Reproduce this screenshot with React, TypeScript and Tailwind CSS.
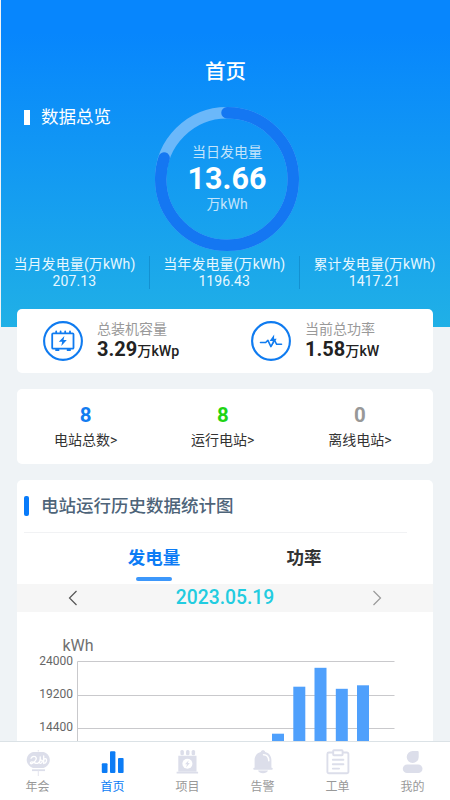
import React from 'react';

const stats = [
  { label: '当月发电量(万kWh)', value: '207.13' },
  { label: '当年发电量(万kWh)', value: '1196.43' },
  { label: '累计发电量(万kWh)', value: '1417.21' },
];

const stations = [
  { label: '电站总数>', value: '8', color: 'text-[#127cf0]' },
  { label: '运行电站>', value: '8', color: 'text-[#1fd414]' },
  { label: '离线电站>', value: '0', color: 'text-[#989898]' },
];

const bars = [
  { x: 272, y: 733.7 },
  { x: 293.3, y: 686.7 },
  { x: 314.5, y: 667.8 },
  { x: 335.8, y: 688.8 },
  { x: 357, y: 685.3 },
];

function Ring() {
  const r = 66.3;
  const c = 2 * Math.PI * r;
  return (
    <svg className="col-start-1 row-start-1" width="146" height="146" viewBox="0 0 146 146" fill="none">
      <circle cx="73" cy="73" r={r} stroke="#6bb8fa" strokeWidth="11.5" />
      <circle
        cx="73"
        cy="73"
        r={r}
        stroke="#1477f2"
        strokeWidth="11.5"
        strokeLinecap="round"
        strokeDasharray={`${c * 0.8} ${c}`}
        transform="rotate(-90 73 73)"
      />
    </svg>
  );
}

function CapacityIcon() {
  return (
    <svg width="40" height="40" viewBox="0 0 40 40" fill="none" stroke="#0f7bf0">
      <circle cx="20" cy="20" r="18.9" strokeWidth="2.1" />
      <rect x="9.2" y="12.3" width="21.3" height="15.4" rx="1" strokeWidth="1.8" />
      <path d="M13.2 12v-1.6M17.6 12v-1.6M22.2 12v-1.6M27 12v-1.6" strokeWidth="1.8" strokeLinecap="round" />
      <path d="M12.3 29h4M23.8 29h4" strokeWidth="2.2" />
      <path d="M21.4 15l-5.6 5.800h3.400l-.9 4.200 5.500-5.900h-3.300z" fill="#0f7bf0" stroke="none" />
    </svg>
  );
}

function PowerIcon() {
  return (
    <svg width="40" height="40" viewBox="0 0 40 40" fill="none" stroke="#0f7bf0" strokeLinejoin="round" strokeLinecap="round">
      <circle cx="20" cy="20" r="18.9" strokeWidth="2.1" />
      <path d="M9.5 21.5h5.2l2.2-2.200 3 6.300 1.900-3.400M23.500 19.300l2.200 4h4.800" strokeWidth="1.600" />
      <path d="M23.200 13.400l-4.600 6.600h3.100l-.8 4.700 4.800-6.900h-2.700z" fill="#0f7bf0" stroke="none" />
    </svg>
  );
}

function MeetingIcon() {
  return (
    <svg width="26" height="28" viewBox="0 0 26 28" fill="none">
      <path d="M8 3h10.500c4 1 6.300 4.500 6.300 8s-2.300 6.500-6.300 8H8c-4-1.500-6.300-4.500-6.300-8S4 4 8 3z" fill="#dcdeea" />
      <path d="M6 9.200c1.400-2.500 4.700-2.400 5.200-.2.5 2-1.300 3.500-3.800 5.300-1.800 1.300-2.800-.5-1.200-1.300 2.200-1 4.100 2.400 6.800 1.200 1.900-.8 2.500-3.200 2.200-6.300M15.500 11.500c1.600-.8 2.300.2 1.500 1.700-.6 1-1.500 1.300-2 1M18.700 7v7.500M19 10.300c1.600-1.300 2.800-.3 2.500 1.500-.3 1.700-1.600 2.500-2.500 2.200" stroke="white" strokeWidth="1.300" strokeLinecap="round" />
      <path d="M7 21.200h13" stroke="#dcdeea" strokeWidth="1.800" />
      <path d="M13.300 21.500V27M13.300 1v1.500" stroke="#e5e6ef" strokeWidth="1.100" />
    </svg>
  );
}

function HomeIcon() {
  return (
    <svg width="26" height="28" viewBox="0 0 26 28" fill="#0c7cf5">
      <rect x="1.800" y="14.200" width="5.700" height="9.800" rx="1" />
      <rect x="10" y="2.200" width="5.400" height="21.800" rx="1" />
      <rect x="18" y="9" width="5.600" height="15" rx="1" />
    </svg>
  );
}

function ProjectIcon() {
  return (
    <svg width="26" height="28" viewBox="0 0 26 28" fill="#dcdeea">
      <rect x="5.400" y="1" width="3.500" height="5.300" rx="1.500" />
      <rect x="11" y="1" width="3.500" height="5.300" rx="1.500" />
      <rect x="16.600" y="1" width="3.500" height="5.300" rx="1.500" />
      <path d="M3.300 6.800h18.200v15.700H3.300zM1.600 22.800h21.500v1.700H1.600z" />
      <circle cx="12.400" cy="14.800" r="5" fill="white" />
      <path d="M13.800 11.200l-3.800 4h2l-.9 3.300 3.700-4.400h-2z" />
    </svg>
  );
}

function BellIcon() {
  return (
    <svg width="26" height="28" viewBox="0 0 26 28" fill="#dcdeea">
      <path d="M13 1.300c1.100 0 2 .7 2.200 1.600 3.700.9 6.200 4 6.200 7.900v8.300H4.600v-8.300c0-3.900 2.500-7 6.200-7.900.2-.9 1.100-1.600 2.200-1.600z" />
      <rect x="3.300" y="18.800" width="19.400" height="1.900" rx=".8" />
      <path d="M8 21.500h10c-.8 1.800-2.500 2.800-5 2.800s-4.200-1-5-2.800z" />
      <path d="M13.500 5.700c3.200 0 5.200 2.200 5.300 6" stroke="white" strokeWidth="1.500" strokeLinecap="round" fill="none" />
    </svg>
  );
}

function OrderIcon() {
  return (
    <svg width="26" height="28" viewBox="0 0 26 28" fill="none" stroke="#dcdeea" strokeWidth="1.900">
      <path d="M8 3.500H3.900a1.500 1.500 0 0 0-1.500 1.500v17.800a1.500 1.500 0 0 0 1.500 1.500h18a1.500 1.500 0 0 0 1.500-1.500V5a1.500 1.500 0 0 0-1.500-1.500H18" />
      <rect x="8.200" y="1.200" width="9.400" height="5" rx=".7" />
      <path d="M7.800 10.800h10.600M7.800 15.300h10.600M7.800 19.600h6.300" strokeLinecap="round" />
    </svg>
  );
}

function ProfileIcon() {
  return (
    <svg width="26" height="28" viewBox="0 0 26 28" fill="#dcdeea">
      <path d="M12.700 2h4.700c.9 0 1.300.5 1.300 1.300v4.900A6 6 0 1 1 12.700 2z" />
      <rect x="2.800" y="15.500" width="19.700" height="8.600" rx="4.300" />
    </svg>
  );
}

const tabs = [
  { label: '年会', Icon: MeetingIcon },
  { label: '首页', Icon: HomeIcon, active: true },
  { label: '项目', Icon: ProjectIcon },
  { label: '告警', Icon: BellIcon },
  { label: '工单', Icon: OrderIcon },
  { label: '我的', Icon: ProfileIcon },
];

function Chart() {
  return (
    <svg
      className="block font-[Roboto,'Noto_Sans_CJK_SC',sans-serif]"
      width="416"
      height="129"
      viewBox="17 612 416 129"
    >
      <text x="62.500" y="650.500" fontSize="16" fill="#707070">kWh</text>
      <g stroke="#c9c9cc" strokeWidth="1">
        <path d="M77.500 661.500h317M77.500 695.500h317M77.500 728.500h317M77.500 661.500V741" />
      </g>
      <g fontSize="12" fill="#666" textAnchor="end">
        <text x="73" y="664.500">24000</text>
        <text x="73" y="697.800">19200</text>
        <text x="73" y="731.300">14400</text>
      </g>
      {bars.map((b) => (
        <rect key={b.x} x={b.x} y={b.y} width="12" height={741 - b.y} fill="#4fa0fc" />
      ))}
    </svg>
  );
}

export default function App() {
  return (
    <div className="flex h-[800px] w-[450px] flex-col overflow-hidden bg-[#eff3f6] font-[Roboto,'Noto_Sans_CJK_SC',sans-serif]">
      <main className="h-[741px] shrink-0 overflow-hidden">
        <header className="ml-px h-[327px] bg-linear-to-b/srgb from-[#0786fd] from-10% to-[#20b0e6] text-white">
          <h1 className="pt-[57px] text-center text-[20.500px] leading-[30px] font-medium">首页</h1>
          <div className="flex h-[166px] items-start">
            <div className="flex w-[153px] items-center gap-[11px] pt-[17px] pl-[23px]">
              <span className="h-[15px] w-[6px] bg-white" />
              <h2 className="text-[17.500px] leading-[26px]">数据总览</h2>
            </div>
            <div className="mt-[18.500px] grid place-items-center">
              <Ring />
              <div className="col-start-1 row-start-1 flex flex-col items-center text-[#c3e4fb]">
                <span className="text-[14px] leading-[19px]">当日发电量</span>
                <strong className="text-[30.500px] leading-[33px] font-bold text-white">13.66</strong>
                <span className="text-[14px] leading-[19px]">万kWh</span>
              </div>
            </div>
          </div>
          <div className="-ml-px flex divide-x divide-[#1391d2] pt-[3px]">
            {stats.map((s) => (
              <div key={s.label} className="flex h-[33px] w-[149.800px] flex-col items-center text-[#e6f7ff]">
                <span className="text-[14px] leading-[17px] tracking-[0.1px] whitespace-nowrap">{s.label}</span>
                <span className="text-[14px] leading-[17px] tracking-[0.1px]">{s.value}</span>
              </div>
            ))}
          </div>
        </header>

        <div className="-mt-[18px] flex flex-col gap-[16px] px-[17px]">
          <section className="flex h-[64px] rounded-[5px] bg-white">
            <div className="flex w-[207px] items-center gap-[14px] pl-[26px]">
              <CapacityIcon />
              <div>
                <p className="text-[14px] leading-[18px] text-[#999]">总装机容量</p>
                <p className="text-[20px] leading-[22px] font-bold text-[#222]">
                  3.29<span className="text-[14.200px] font-medium">万kWp</span>
                </p>
              </div>
            </div>
            <div className="flex items-center gap-[14px] pl-[27px]">
              <PowerIcon />
              <div>
                <p className="text-[14px] leading-[18px] text-[#999]">当前总功率</p>
                <p className="text-[20px] leading-[22px] font-bold text-[#222]">
                  1.58<span className="text-[14.200px] font-medium">万kW</span>
                </p>
              </div>
            </div>
          </section>

          <section className="flex h-[75px] rounded-[5px] bg-white">
            {stations.map((s) => (
              <div key={s.label} className="flex w-[137.200px] flex-col items-center pt-[14px]">
                <span className={`text-[20.500px] leading-[24px] font-bold ${s.color}`}>{s.value}</span>
                <span className="mt-[3px] text-[14px] leading-[20px] text-[#333]">{s.label}</span>
              </div>
            ))}
          </section>

          <section className="h-[280px] rounded-[5px] bg-white">
            <div className="mx-[7px] flex h-[53px] w-[383px] items-center gap-[12px] border-b border-[#f1f2f4]">
              <span className="h-[20px] w-[5px] rounded-[2px] bg-[#087bfa]" />
              <h2 className="text-[17.500px] leading-[26px] font-medium text-[#4e6479]">电站运行历史数据统计图</h2>
            </div>
            <div className="flex h-[51px] pl-[62px] text-[17.500px]">
              <div className="flex w-[150px] flex-col items-center pt-[12px]">
                <span className="leading-[26px] font-bold text-[#0c7cf5]">发电量</span>
                <span className="mt-[6px] h-[4px] w-[36px] rounded-[2px] bg-[#3c97fb]" />
              </div>
              <div className="flex w-[150px] flex-col items-center pt-[12px]">
                <span className="leading-[26px] font-bold text-[#333]">功率</span>
              </div>
            </div>
            <div className="flex h-[28px] items-center justify-between bg-[#f6f6f6] pr-[51px] pl-[51px]">
              <svg width="10" height="16" viewBox="0 0 10 16" fill="none" stroke="#555" strokeWidth="1.200">
                <path d="M8.500 1L1.500 8l7 7" />
              </svg>
              <span className="text-[19.300px] leading-[28px] font-medium text-[#22cce0]">2023.05.19</span>
              <svg width="10" height="16" viewBox="0 0 10 16" fill="none" stroke="#999" strokeWidth="1.200">
                <path d="M1.500 1l7 7-7 7" />
              </svg>
            </div>
            <Chart />
          </section>
        </div>
      </main>

      <nav className="flex h-[59px] shrink-0 border-t border-[#dbe2e6] bg-white">
        {tabs.map(({ label, Icon, active }) => (
          <div key={label} className="flex w-[75px] flex-col items-center pt-[7px]">
            <Icon />
            <span className={`mt-px text-[12px] leading-[18px] ${active ? 'text-[#0c7cf5]' : 'text-[#999]'}`}>{label}</span>
          </div>
        ))}
      </nav>
    </div>
  );
}
